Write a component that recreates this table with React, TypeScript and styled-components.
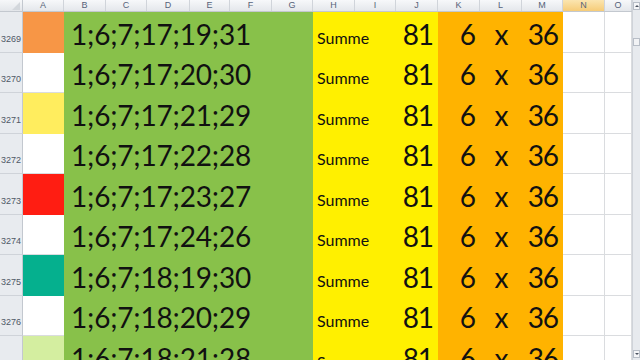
import styled, { createGlobalStyle } from "styled-components";

const GlobalStyle = createGlobalStyle`
  html, body {
    margin: 0;
    padding: 0;
    background: #ffffff;
    overflow: hidden;
  }
`;

const colWidths = [23, 41, 42, 41, 43, 40, 42, 41, 42, 41, 42, 42, 42, 41, 42, 27];
const letters = ["A", "B", "C", "D", "E", "F", "G", "H", "I", "J", "K", "L", "M", "N", "O"];
const template = colWidths.map((w) => `${w}px`).join(" ");

const rows = [
  { id: 3269, mark: "#f79646", numbers: "1;6;7;17;19;31" },
  { id: 3270, mark: "", numbers: "1;6;7;17;20;30" },
  { id: 3271, mark: "#ffed5e", numbers: "1;6;7;17;21;29" },
  { id: 3272, mark: "", numbers: "1;6;7;17;22;28" },
  { id: 3273, mark: "#ff1d12", numbers: "1;6;7;17;23;27" },
  { id: 3274, mark: "", numbers: "1;6;7;17;24;26" },
  { id: 3275, mark: "#05b08e", numbers: "1;6;7;18;19;30" },
  { id: 3276, mark: "", numbers: "1;6;7;18;20;29" },
  { id: 3277, mark: "#d4eea0", numbers: "1;6;7;18;21;28" },
];

export default function App() {
  return (
    <Window>
      <GlobalStyle />
      <Sheet>
        <HeaderRow>
          <Corner>
            <CornerMark />
          </Corner>
          {letters.map((l) => (
            <ColHeader key={l} $active={l === "N"}>
              {l}
            </ColHeader>
          ))}
        </HeaderRow>
        {rows.map((row) => (
          <Row key={row.id}>
            <RowHeader>{row.id}</RowHeader>
            <MarkCell $color={row.mark} />
            <NumbersCell>{row.numbers}</NumbersCell>
            <SumLabel>Summe</SumLabel>
            <SumValue>81</SumValue>
            <OrangeCell $align="flex-end">6</OrangeCell>
            <OrangeCell $align="center">x</OrangeCell>
            <OrangeCell $align="flex-end">36</OrangeCell>
            <EmptyCell />
            <EmptyCell />
          </Row>
        ))}
      </Sheet>
      <ScrollBar>
        <ScrollButton>
          <Arrow $up />
        </ScrollButton>
        <Thumb />
        <Track />
        <ScrollButton>
          <Arrow />
        </ScrollButton>
      </ScrollBar>
    </Window>
  );
}

const Window = styled.div`
  width: 640px;
  height: 360px;
  display: flex;
  overflow: hidden;
  background: #ffffff;
`;

const Sheet = styled.div`
  width: 632px;
  display: flex;
  flex-direction: column;
  flex-shrink: 0;
`;

const HeaderRow = styled.div`
  display: grid;
  grid-template-columns: ${template};
  height: 12px;
  flex-shrink: 0;
  border-bottom: 1px solid #c3c8cf;
  box-sizing: border-box;
`;

const Corner = styled.div`
  position: relative;
  background: linear-gradient(#f6f7f9, #e3e6ea);
  border-right: 1px solid #c3c8cf;
`;

const CornerMark = styled.div`
  position: absolute;
  right: 2px;
  bottom: 1px;
  width: 0;
  height: 0;
  border-left: 8px solid transparent;
  border-bottom: 8px solid #d3d7dc;
`;

const ColHeader = styled.div<{ $active?: boolean }>`
  display: flex;
  align-items: center;
  justify-content: center;
  background: ${(p) =>
    p.$active
      ? "linear-gradient(#fbe5b0, #f6cc78)"
      : "linear-gradient(#f7f8fa, #e4e7eb)"};
  border-right: 1px solid #d0d4da;
  color: #56637a;
  font-family: "Liberation Sans", Arial, sans-serif;
  font-size: 9px;
  line-height: 1;
`;

const Row = styled.div`
  display: grid;
  grid-template-columns: ${template};
  height: 40.5px;
  flex-shrink: 0;
`;

const RowHeader = styled.div`
  display: flex;
  align-items: flex-end;
  justify-content: center;
  padding-bottom: 8px;
  box-sizing: border-box;
  background: #e8ebef;
  border-right: 1px solid #c3c8cf;
  border-bottom: 1px solid #cfd3d9;
  color: #4f5866;
  font-family: "Liberation Sans", Arial, sans-serif;
  font-size: 9px;
  line-height: 1;
`;

const MarkCell = styled.div<{ $color: string }>`
  background: ${(p) => p.$color || "#ffffff"};
  border-bottom: 1px solid ${(p) => p.$color || "#dadcdf"};
  box-sizing: border-box;
`;

const BigText = styled.div`
  display: flex;
  align-items: flex-end;
  box-sizing: border-box;
  font-family: Lato, "Open Sans", sans-serif;
  font-size: 28px;
  line-height: 28px;
  letter-spacing: -1.1px;
  color: #111111;
  padding-bottom: 5px;
  white-space: nowrap;
`;

const NumbersCell = styled(BigText)`
  grid-column: span 6;
  background: #88c14a;
  padding-left: 7px;
  letter-spacing: -0.2px;
`;

const SumLabel = styled.div`
  grid-column: span 2;
  display: flex;
  align-items: flex-end;
  box-sizing: border-box;
  background: #fff000;
  padding-left: 4px;
  padding-bottom: 7px;
  font-family: Lato, "Open Sans", sans-serif;
  font-size: 16px;
  line-height: 16px;
  color: #111111;
`;

const SumValue = styled(BigText)`
  background: #fff000;
  justify-content: flex-end;
  padding-right: 5px;
`;

const OrangeCell = styled(BigText)<{ $align: string }>`
  background: #ffb300;
  justify-content: ${(p) => p.$align};
  padding-right: ${(p) => (p.$align === "flex-end" ? "5px" : "0")};
`;

const EmptyCell = styled.div`
  background: #ffffff;
  border-right: 1px solid #dadcdf;
  border-bottom: 1px solid #dadcdf;
  box-sizing: border-box;
`;

const ScrollBar = styled.div`
  width: 8px;
  flex-shrink: 0;
  display: flex;
  flex-direction: column;
  align-items: center;
  padding-top: 2px;
  background: #e7eaee;
  border-left: 1px solid #cfd3d9;
  box-sizing: border-box;
`;

const ScrollButton = styled.div`
  width: 7px;
  height: 8px;
  display: flex;
  align-items: center;
  justify-content: center;
  background: #f4f5f7;
  border: 1px solid #b8bec7;
  box-sizing: border-box;
  margin-bottom: 2px;
`;

const Arrow = styled.div<{ $up?: boolean }>`
  width: 0;
  height: 0;
  border-left: 2px solid transparent;
  border-right: 2px solid transparent;
  ${(p) =>
    p.$up ? "border-bottom: 2px solid #4a5260;" : "border-top: 2px solid #4a5260;"}
`;

const Thumb = styled.div`
  width: 7px;
  height: 8px;
  margin-top: 26px;
  background: #f2f3f5;
  border: 1px solid #b8bec7;
  box-sizing: border-box;
`;

const Track = styled.div`
  flex: 1;
`;
